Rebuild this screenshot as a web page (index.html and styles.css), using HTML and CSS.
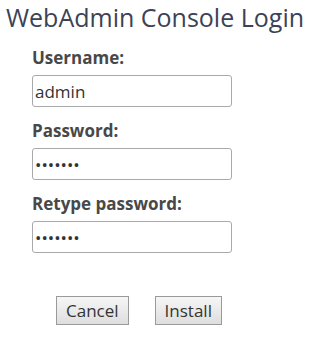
FILE: index.html
```html
<!DOCTYPE html>
<html>
<head>
<meta charset="utf-8">
<link rel="stylesheet" href="styles.css">
</head>
<body>
<h1 class="title">WebAdmin Console Login</h1>
<form class="form">
  <div class="field">
    <label class="label">Username:</label>
    <input class="input" type="text" value="admin">
  </div>
  <div class="field">
    <label class="label">Password:</label>
    <input class="input" type="password" value="1234567">
  </div>
  <div class="field">
    <label class="label">Retype password:</label>
    <input class="input" type="password" value="1234567">
  </div>
  <div class="buttons">
    <button type="button" class="btn">Cancel</button>
    <button type="button" class="btn">Install</button>
  </div>
</form>
</body>
</html>
```
FILE: styles.css
```css
html, body {
  margin: 0;
  padding: 0;
  background: #fff;
  font-family: "Open Sans", sans-serif;
}
.title {
  margin: 0;
  padding: 0 0 0 6px;
  font-size: 25px;
  font-weight: 400;
  line-height: 34px;
  color: #3b4356;
}
.form {
  display: flex;
  flex-direction: column;
  padding: 14px 0 0 32px;
}
.field {
  display: flex;
  flex-direction: column;
  width: 200px;
  margin-bottom: 14px;
}
.label {
  font-size: 17px;
  font-weight: 700;
  line-height: 20px;
  color: #484848;
  margin-bottom: 7px;
}
.input {
  box-sizing: border-box;
  width: 200px;
  height: 32px;
  margin: 0;
  padding: 0 2px;
  border: 1px solid #a9a9a9;
  border-radius: 3px;
  font-family: "Open Sans", sans-serif;
  font-size: 17px;
  color: #333;
  background: #fff;
  outline: none;
}
.buttons {
  display: flex;
  gap: 26px;
  padding: 29px 0 0 24px;
}
.btn {
  box-sizing: border-box;
  height: 29px;
  padding: 0 9px;
  margin: 0;
  border: 1px solid #9a9a9a;
  border-radius: 0;
  background: linear-gradient(#f6f6f6, #dedede);
  font-family: "Open Sans", sans-serif;
  font-size: 17px;
  color: #333;
}
```
